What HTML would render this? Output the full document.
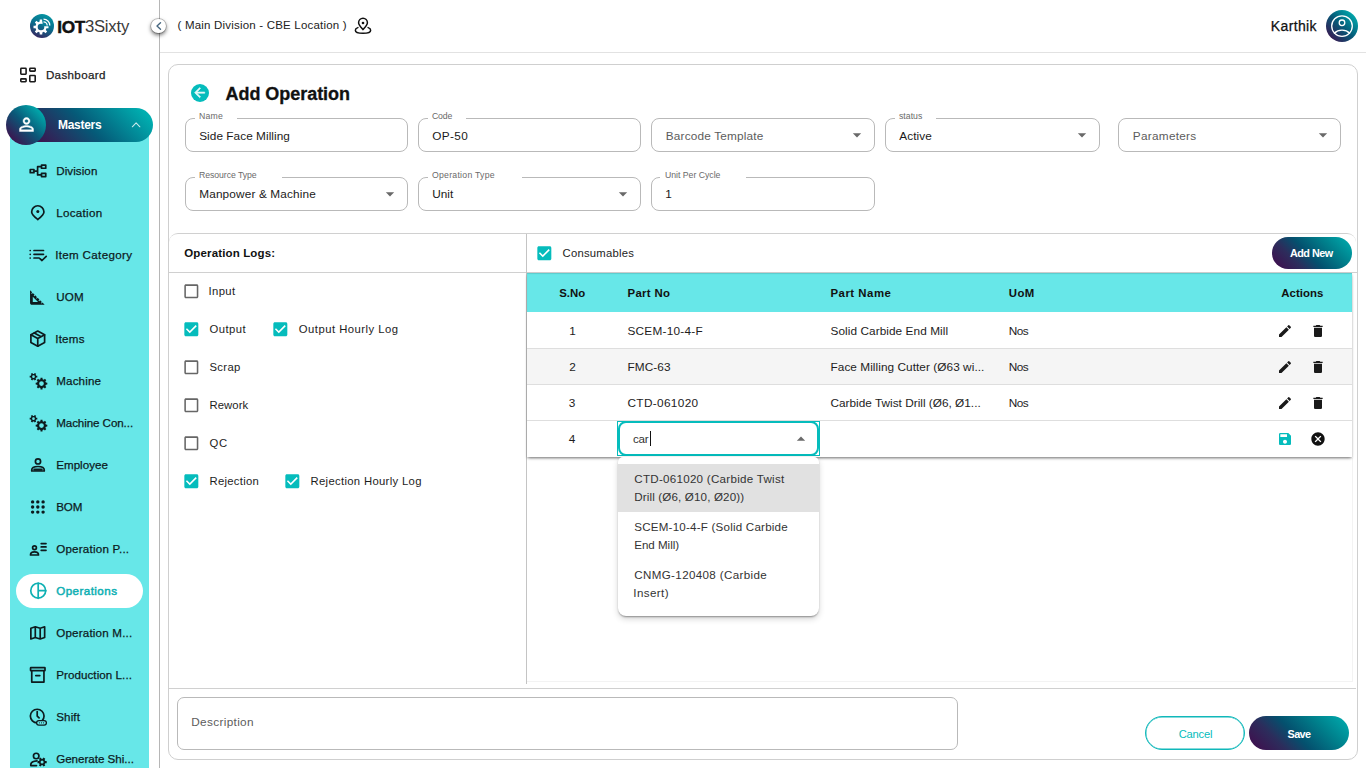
<!DOCTYPE html>
<html lang="en"><head><meta charset="utf-8"><title>Add Operation - IOT3Sixty</title>
<style>
html,body{margin:0;padding:0}
body{width:1366px;height:768px;overflow:hidden;position:relative;background:#fff;font-family:"Liberation Sans",sans-serif;color:#1d1d1d}
.t{position:absolute;white-space:nowrap;font-weight:400}
svg{display:block}
</style></head><body>
<aside style="position:absolute;left:0;top:0;width:159px;height:768px;border-right:1px solid #b6b6b6;background:#fff">
<svg style="position:absolute;left:30px;top:14px" width="24" height="24" viewBox="0 0 24 24"><defs><linearGradient id="lg" x1="0.7" y1="0" x2="0.3" y2="1"><stop offset="0" stop-color="#0597a3"/><stop offset=".5" stop-color="#0a6d8c"/><stop offset="1" stop-color="#3a2560"/></linearGradient></defs><circle cx="12" cy="12" r="12" fill="url(#lg)"/><path fill="#fff" fill-rule="evenodd" d="M16.43 11.65 L18.50 11.75 L18.50 14.25 L16.43 14.35 L15.80 15.89 L17.18 17.42 L15.42 19.18 L13.89 17.80 L12.35 18.43 L12.25 20.50 L9.75 20.50 L9.65 18.43 L8.11 17.80 L6.58 19.18 L4.82 17.42 L6.20 15.89 L5.57 14.35 L3.50 14.25 L3.50 11.75 L5.57 11.65 L6.20 10.11 L4.82 8.58 L6.58 6.82 L8.11 8.20 L9.65 7.57 L9.75 5.50 L12.25 5.50 L12.35 7.57 L13.89 8.20 L15.42 6.82 L17.18 8.58 L15.80 10.11Z M14.30 13.00 a3.3 3.3 0 1 0 -6.60 0 a3.3 3.3 0 1 0 6.60 0Z"/><path d="M12.5 3.5v8.800h8.800A8.800 8.800 0 0 0 12.500 3.500z" fill="#0a7f98"/><g fill="none" stroke="#fff" stroke-width="1.300"><path d="M13.500 5.200a6.300 6.300 0 0 1 6.300 6.300M13.500 7.800a3.700 3.700 0 0 1 3.700 3.700"/></g></svg>
<span class="t" style="left:57.20px;top:16.50px;font-size:17.2px;line-height:20px;color:#111;font-weight:700;-webkit-text-stroke:.5px currentColor;letter-spacing:-0.27px">IOT</span>
<span class="t" style="left:84.90px;top:16.50px;font-size:16.7px;line-height:20px;color:#3a3a3a;letter-spacing:-0.22px">3Sixty</span>
<svg style="position:absolute;left:18px;top:65px;color:#1a1a1a" width="20" height="20" viewBox="18 65 20 20" fill="none" stroke="currentColor" stroke-width="1.6" stroke-linecap="round" stroke-linejoin="round"><rect x="20.8" y="68.3" width="5.3" height="5.9" rx=".6"/><rect x="20.8" y="78.9" width="5.3" height="2.8" rx=".6"/><rect x="29.8" y="68.3" width="5.4" height="2.8" rx=".6"/><rect x="29.8" y="75.55" width="5.4" height="6.15" rx=".6"/></svg>
<span class="t" style="left:45.90px;top:66.70px;font-size:11.6px;line-height:16px;color:#1d1d1d;-webkit-text-stroke:.25px currentColor;letter-spacing:0.35px">Dashboard</span>
<div style="position:absolute;left:10px;top:125px;width:139px;height:643px;background:#67e7e8"></div>
<div style="position:absolute;left:20px;top:108px;width:133px;height:34px;border-radius:17px;background:linear-gradient(45deg,#3b1650 12%,#055a78 50%,#00aeb0 92%)"></div>
<div style="position:absolute;left:6px;top:105px;width:40px;height:40px;border-radius:50%;background:linear-gradient(45deg,#3b1650 14%,#0a5878 50%,#00a9ac 86%)"></div>
<svg style="position:absolute;left:15.5px;top:114.1px;color:#fff;" width="21" height="21" viewBox="0 0 24 24" fill="currentColor"><path stroke="currentColor" stroke-width=".5" d="M12 5.9c1.16 0 2.1.94 2.1 2.1s-.94 2.1-2.1 2.1S9.9 9.16 9.9 8s.94-2.1 2.1-2.1m0 9c2.97 0 6.1 1.46 6.1 2.1v1.1H5.9V17c0-.64 3.13-2.1 6.1-2.1M12 4C9.79 4 8 5.79 8 8s1.79 4 4 4 4-1.79 4-4-1.79-4-4-4zm0 9c-2.67 0-8 1.34-8 4v3h16v-3c0-2.66-5.33-4-8-4z"/></svg>
<span class="t" style="left:58.00px;top:116.80px;font-size:12px;line-height:16px;color:#fff;font-weight:700;letter-spacing:-0.28px">Masters</span>
<svg style="position:absolute;left:128px;top:118px;color:rgba(255,255,255,.8)" width="16" height="14" viewBox="128 118 16 14" fill="none" stroke="currentColor" stroke-width="1.05" stroke-linecap="round" stroke-linejoin="round"><path d="M132.300 126.800L136.100 122.800L139.900 126.800"/></svg>
<div style="position:absolute;left:16px;top:574px;width:127px;height:34px;border-radius:17px;background:#fff"></div>
<svg style="position:absolute;left:26px;top:159px;color:#0d1b1e" width="24" height="24" viewBox="26 159 24 24" fill="none" stroke="currentColor" stroke-width="1.7" stroke-linecap="round" stroke-linejoin="round"><g transform="translate(0 0)"><rect x="30.25" y="169.5" width="3.7" height="3.2"/><rect x="41.5" y="165.15" width="4.25" height="3.1"/><rect x="41.5" y="173.35" width="4.25" height="3.2"/><path d="M34.7 171.1H37.6M37.6 166.7V174.95M37.6 166.7H40.75M37.6 174.95H40.75"/></g></svg>
<span class="t" style="left:56.20px;top:162.70px;font-size:11.6px;line-height:16px;color:#0d1b1e;-webkit-text-stroke:.25px currentColor;letter-spacing:0.08px">Division</span>
<svg style="position:absolute;left:26px;top:201px;color:#0d1b1e" width="24" height="24" viewBox="26 201 24 24" fill="none" stroke="currentColor" stroke-width="1.7" stroke-linecap="round" stroke-linejoin="round"><g transform="translate(0 0)"><path d="M37.8 219.5C36 218 31.65 214.6 31.65 211.9A6.15 6.15 0 0 1 43.95 211.9C43.95 214.6 39.6 218 37.8 219.5Z"/><circle cx="37.8" cy="211.6" r="1.5" fill="currentColor" stroke="none"/></g></svg>
<span class="t" style="left:56.20px;top:204.70px;font-size:11.6px;line-height:16px;color:#0d1b1e;-webkit-text-stroke:.25px currentColor;letter-spacing:0.30px">Location</span>
<svg style="position:absolute;left:26px;top:243px;color:#0d1b1e" width="24" height="24" viewBox="26 243 24 24" fill="none" stroke="currentColor" stroke-width="1.7" stroke-linecap="round" stroke-linejoin="round"><g transform="translate(0 0)"><path d="M34 250.5H43.5M34 254.3H43.5M34 258H39M30.2 250.5h.01M30.2 254.3h.01M30.2 258h.01M39.9 258.6L42 260.5L46.2 256.3"/></g></svg>
<span class="t" style="left:55.20px;top:246.70px;font-size:11.6px;line-height:16px;color:#0d1b1e;-webkit-text-stroke:.25px currentColor;letter-spacing:0.33px">Item Category</span>
<svg style="position:absolute;left:26px;top:285px;color:#0d1b1e" width="24" height="24" viewBox="26 285 24 24" fill="none" stroke="currentColor" stroke-width="1.7" stroke-linecap="round" stroke-linejoin="round"><g transform="translate(26.4 286.5) scale(0.9125)" fill="currentColor" stroke="none"><path d="M17.66 17.66l-1.06 1.06-.71-.71 1.06-1.06-1.94-1.94-1.06 1.06-.71-.71 1.06-1.06-1.94-1.94-1.06 1.06-.71-.71 1.06-1.06L9.7 9.7l-1.06 1.06-.71-.71 1.06-1.06-1.94-1.94-1.06 1.06-.71-.71 1.06-1.06L4 4v14c0 1.1.9 2 2 2h14l-2.34-2.34zM7 17v-5.76L12.76 17H7z"/></g></svg>
<span class="t" style="left:56.20px;top:288.70px;font-size:11.6px;line-height:16px;color:#0d1b1e;-webkit-text-stroke:.25px currentColor;letter-spacing:0.15px">UOM</span>
<svg style="position:absolute;left:26px;top:327px;color:#0d1b1e" width="24" height="24" viewBox="26 327 24 24" fill="none" stroke="currentColor" stroke-width="1.7" stroke-linecap="round" stroke-linejoin="round"><g transform="translate(0 0)"><path d="M37.75 331L44.6 334.8V342.5L37.75 346.2L30.9 342.5V334.8Z"/><path d="M30.9 334.8L37.75 338.6L44.6 334.8M37.75 338.6V346.2M34.3 332.9L41.2 336.7"/></g></svg>
<span class="t" style="left:55.20px;top:330.70px;font-size:11.6px;line-height:16px;color:#0d1b1e;-webkit-text-stroke:.25px currentColor;letter-spacing:0.24px">Items</span>
<svg style="position:absolute;left:26px;top:369px;color:#0d1b1e" width="24" height="24" viewBox="26 369 24 24" fill="none" stroke="currentColor" stroke-width="1.7" stroke-linecap="round" stroke-linejoin="round"><g transform="translate(0 0)"><path fill="currentColor" stroke="none" fill-rule="evenodd" d="M36.20 375.79 L37.31 375.85 L37.31 377.55 L36.20 377.61 L35.64 378.58 L36.14 379.57 L34.67 380.42 L34.06 379.49 L32.94 379.49 L32.33 380.42 L30.86 379.57 L31.36 378.58 L30.80 377.61 L29.69 377.55 L29.69 375.85 L30.80 375.79 L31.36 374.82 L30.86 373.83 L32.33 372.98 L32.94 373.91 L34.06 373.91 L34.67 372.98 L36.14 373.83 L35.64 374.82Z M34.85 376.70 a1.35 1.35 0 1 0 -2.70 0 a1.35 1.35 0 1 0 2.70 0Z"/><path fill="currentColor" stroke="none" fill-rule="evenodd" d="M45.87 382.52 L47.32 382.63 L47.32 384.57 L45.87 384.68 L45.36 385.92 L46.30 387.03 L44.93 388.40 L43.82 387.46 L42.58 387.97 L42.47 389.42 L40.53 389.42 L40.42 387.97 L39.18 387.46 L38.07 388.40 L36.70 387.03 L37.64 385.92 L37.13 384.68 L35.68 384.57 L35.68 382.63 L37.13 382.52 L37.64 381.28 L36.70 380.17 L38.07 378.80 L39.18 379.74 L40.42 379.23 L40.53 377.78 L42.47 377.78 L42.58 379.23 L43.82 379.74 L44.93 378.80 L46.30 380.17 L45.36 381.28Z M43.85 383.60 a2.35 2.35 0 1 0 -4.70 0 a2.35 2.35 0 1 0 4.70 0Z"/></g></svg>
<span class="t" style="left:56.20px;top:372.70px;font-size:11.6px;line-height:16px;color:#0d1b1e;-webkit-text-stroke:.25px currentColor;letter-spacing:0.17px">Machine</span>
<svg style="position:absolute;left:26px;top:411px;color:#0d1b1e" width="24" height="24" viewBox="26 411 24 24" fill="none" stroke="currentColor" stroke-width="1.7" stroke-linecap="round" stroke-linejoin="round"><g transform="translate(0 42)"><path fill="currentColor" stroke="none" fill-rule="evenodd" d="M36.20 375.79 L37.31 375.85 L37.31 377.55 L36.20 377.61 L35.64 378.58 L36.14 379.57 L34.67 380.42 L34.06 379.49 L32.94 379.49 L32.33 380.42 L30.86 379.57 L31.36 378.58 L30.80 377.61 L29.69 377.55 L29.69 375.85 L30.80 375.79 L31.36 374.82 L30.86 373.83 L32.33 372.98 L32.94 373.91 L34.06 373.91 L34.67 372.98 L36.14 373.83 L35.64 374.82Z M34.85 376.70 a1.35 1.35 0 1 0 -2.70 0 a1.35 1.35 0 1 0 2.70 0Z"/><path fill="currentColor" stroke="none" fill-rule="evenodd" d="M45.87 382.52 L47.32 382.63 L47.32 384.57 L45.87 384.68 L45.36 385.92 L46.30 387.03 L44.93 388.40 L43.82 387.46 L42.58 387.97 L42.47 389.42 L40.53 389.42 L40.42 387.97 L39.18 387.46 L38.07 388.40 L36.70 387.03 L37.64 385.92 L37.13 384.68 L35.68 384.57 L35.68 382.63 L37.13 382.52 L37.64 381.28 L36.70 380.17 L38.07 378.80 L39.18 379.74 L40.42 379.23 L40.53 377.78 L42.47 377.78 L42.58 379.23 L43.82 379.74 L44.93 378.80 L46.30 380.17 L45.36 381.28Z M43.85 383.60 a2.35 2.35 0 1 0 -4.70 0 a2.35 2.35 0 1 0 4.70 0Z"/></g></svg>
<span class="t" style="left:56.20px;top:414.70px;font-size:11.6px;line-height:16px;color:#0d1b1e;-webkit-text-stroke:.25px currentColor;letter-spacing:-0.08px">Machine Con...</span>
<svg style="position:absolute;left:26px;top:453px;color:#0d1b1e" width="24" height="24" viewBox="26 453 24 24" fill="none" stroke="currentColor" stroke-width="1.7" stroke-linecap="round" stroke-linejoin="round"><g transform="translate(0 0)"><circle cx="38" cy="461.4" r="2.6"/><path d="M31.75 471v-1c0-2.500 2.800-3.500 6.250-3.500s6.250 1 6.250 3.500v1z"/><path d="M34.300 469.600H41.700" stroke-width="2.100"/></g></svg>
<span class="t" style="left:56.20px;top:456.70px;font-size:11.6px;line-height:16px;color:#0d1b1e;-webkit-text-stroke:.25px currentColor;letter-spacing:0.03px">Employee</span>
<svg style="position:absolute;left:26px;top:495px;color:#0d1b1e" width="24" height="24" viewBox="26 495 24 24" fill="none" stroke="currentColor" stroke-width="1.7" stroke-linecap="round" stroke-linejoin="round"><g transform="translate(0 0)" fill="currentColor" stroke="none"><circle cx="32.6" cy="501.9" r="1.7"/><circle cx="32.6" cy="507" r="1.7"/><circle cx="32.6" cy="512.1" r="1.7"/><circle cx="37.8" cy="501.9" r="1.7"/><circle cx="37.8" cy="507" r="1.7"/><circle cx="37.8" cy="512.1" r="1.7"/><circle cx="43.1" cy="501.9" r="1.7"/><circle cx="43.1" cy="507" r="1.7"/><circle cx="43.1" cy="512.1" r="1.7"/></g></svg>
<span class="t" style="left:56.20px;top:498.70px;font-size:11.6px;line-height:16px;color:#0d1b1e;-webkit-text-stroke:.25px currentColor;letter-spacing:-0.08px">BOM</span>
<svg style="position:absolute;left:26px;top:537px;color:#0d1b1e" width="24" height="24" viewBox="26 537 24 24" fill="none" stroke="currentColor" stroke-width="1.7" stroke-linecap="round" stroke-linejoin="round"><g transform="translate(0 0)"><circle cx="34.5" cy="547.7" r="1.9"/><path d="M30.5 555c0-2 1.800-3.200 4-3.200s4 1.200 4 3.200z"/><path d="M41.200 543.600H46M41.200 546.900H46M41.200 550.300H46"/></g></svg>
<span class="t" style="left:56.20px;top:540.70px;font-size:11.6px;line-height:16px;color:#0d1b1e;-webkit-text-stroke:.25px currentColor;letter-spacing:0.22px">Operation P...</span>
<svg style="position:absolute;left:26px;top:579px;color:#0fb0b3" width="24" height="24" viewBox="26 579 24 24" fill="none" stroke="currentColor" stroke-width="1.7" stroke-linecap="round" stroke-linejoin="round"><g transform="translate(0 0)" stroke-width="1.700"><circle cx="38.2" cy="590.7" r="7.45"/><path d="M38.2 583.1V598.3M38.2 590.7H45.8"/></g></svg>
<span class="t" style="left:56.20px;top:582.70px;font-size:11.6px;line-height:16px;color:#0fb0b3;-webkit-text-stroke:.5px currentColor;letter-spacing:0.45px">Operations</span>
<svg style="position:absolute;left:26px;top:621px;color:#0d1b1e" width="24" height="24" viewBox="26 621 24 24" fill="none" stroke="currentColor" stroke-width="1.7" stroke-linecap="round" stroke-linejoin="round"><g transform="translate(0 0)"><path d="M30.85 628.3L35.3 626.8L40.2 628.3L44.65 626.8V637.5L40.2 639L35.3 637.5L30.85 639ZM35.3 626.8V637.5M40.2 628.3V639"/></g></svg>
<span class="t" style="left:56.20px;top:624.70px;font-size:11.6px;line-height:16px;color:#0d1b1e;-webkit-text-stroke:.25px currentColor;letter-spacing:0.20px">Operation M...</span>
<svg style="position:absolute;left:26px;top:663px;color:#0d1b1e" width="24" height="24" viewBox="26 663 24 24" fill="none" stroke="currentColor" stroke-width="1.7" stroke-linecap="round" stroke-linejoin="round"><g transform="translate(0 0)"><rect x="30.55" y="667.65" width="14.45" height="2.9" rx=".4"/><path d="M31.75 671V682.05H43.95V671M35.8 675.600H39.800"/></g></svg>
<span class="t" style="left:56.20px;top:666.70px;font-size:11.6px;line-height:16px;color:#0d1b1e;-webkit-text-stroke:.25px currentColor;letter-spacing:0.07px">Production L...</span>
<svg style="position:absolute;left:26px;top:705px;color:#0d1b1e" width="24" height="24" viewBox="26 705 24 24" fill="none" stroke="currentColor" stroke-width="1.7" stroke-linecap="round" stroke-linejoin="round"><g transform="translate(0 0)"><circle cx="37.2" cy="716.1" r="6.85"/><path d="M37.2 711.500V716.100L39.100 717.900"/><rect x="36.600" y="720.600" width="9.800" height="4.500" rx="2.250" fill="#67e7e8" stroke-width="1.300"/><g fill="currentColor" stroke="none"><circle cx="39.400" cy="722.850" r=".55"/><circle cx="41.500" cy="722.850" r=".55"/><circle cx="43.600" cy="722.850" r=".55"/></g></g></svg>
<span class="t" style="left:56.20px;top:708.70px;font-size:11.6px;line-height:16px;color:#0d1b1e;-webkit-text-stroke:.25px currentColor;letter-spacing:0.13px">Shift</span>
<svg style="position:absolute;left:26px;top:747px;color:#0d1b1e" width="24" height="24" viewBox="26 747 24 24" fill="none" stroke="currentColor" stroke-width="1.7" stroke-linecap="round" stroke-linejoin="round"><g transform="translate(0 0)"><circle cx="36.2" cy="756" r="2.750"/><path d="M37 760.800C33.500 761 30.800 762.300 30.800 764.600V765.600H36.500"/><path fill="currentColor" stroke="none" fill-rule="evenodd" d="M45.23 761.05 L46.69 761.07 L46.69 763.13 L45.23 763.15 L44.58 764.28 L45.28 765.56 L43.51 766.58 L42.75 765.33 L41.45 765.33 L40.69 766.58 L38.92 765.56 L39.62 764.28 L38.97 763.15 L37.51 763.13 L37.51 761.07 L38.97 761.05 L39.62 759.92 L38.92 758.64 L40.69 757.62 L41.45 758.87 L42.75 758.87 L43.51 757.62 L45.28 758.64 L44.58 759.92Z M43.60 762.10 a1.5 1.5 0 1 0 -3.00 0 a1.5 1.5 0 1 0 3.00 0Z"/></g></svg>
<span class="t" style="left:56.20px;top:750.70px;font-size:11.6px;line-height:16px;color:#0d1b1e;-webkit-text-stroke:.25px currentColor;letter-spacing:-0.02px">Generate Shi...</span>
</aside>
<header style="position:absolute;left:160px;top:0;width:1206px;height:52px;border-bottom:1px solid #e2e2e2;background:#fff">
</header>
<div style="position:absolute;left:151.300px;top:18.500px;width:14.800px;height:14.800px;border-radius:50%;background:#fff;box-shadow:0 0 0 .7px rgba(0,0,0,.25),0 2px 4px rgba(0,0,0,.6)"></div>
<svg style="position:absolute;left:151px;top:18px;color:#45657e" width="15" height="16" viewBox="151 18 15 16" fill="none" stroke="currentColor" stroke-width="1.4" stroke-linecap="round" stroke-linejoin="round"><path d="M160.500 22.800L157 26L160.500 29.200"/></svg>
<span class="t" style="left:177.50px;top:16.90px;font-size:11.5px;line-height:16px;color:#222;letter-spacing:0.20px">( Main Division - CBE Location )</span>
<svg style="position:absolute;left:352px;top:14px;color:#111" width="22" height="22" viewBox="352 14 22 22" fill="none" stroke="currentColor" stroke-width="1.5" stroke-linecap="round" stroke-linejoin="round"><path d="M363 29.600C361 27.200 358.600 25 358.600 22.700A4.400 4.400 0 0 1 367.400 22.700C367.400 25 365 27.200 363 29.600Z"/><circle cx="363" cy="23" r="1.300" fill="currentColor" stroke="none"/><path d="M357.900 27.600C356.200 28.200 355.350 29.200 355.350 30.200C355.350 32 358.800 33.300 363 33.300S370.650 32 370.650 30.200C370.650 29.200 369.800 28.200 368.100 27.600"/></svg>
<span class="t" style="left:1270.80px;top:17.00px;font-size:14px;line-height:18px;color:#111;-webkit-text-stroke:.25px currentColor;letter-spacing:0.37px">Karthik</span>
<div style="position:absolute;left:1326px;top:10px;width:32px;height:32px;border-radius:50%;background:linear-gradient(45deg,#3b1650 10%,#055a78 50%,#00aeb0 90%)"></div>
<svg style="position:absolute;left:1329px;top:13px;color:#fff" width="26" height="26" viewBox="1329 13 26 26" fill="none" stroke="currentColor" stroke-width="1.3" stroke-linecap="round" stroke-linejoin="round"><circle cx="1342" cy="26.1" r="10.300"/><circle cx="1342" cy="22.800" r="2.800"/><path d="M1334.400 33.200C1336.200 31.300 1338.900 30.200 1342 30.200S1347.800 31.300 1349.600 33.200"/></svg>
<main style="position:absolute;left:168px;top:64px;width:1188px;height:694px;border:1px solid #cfcfcf;border-radius:10px;background:#fff"></main>
<div style="position:absolute;left:191px;top:84px;width:18px;height:18px;border-radius:50%;background:#05bcbc"></div>
<svg style="position:absolute;left:192.35px;top:85.3px;color:#e4f8f8;" width="15.3" height="15.3" viewBox="0 0 24 24" fill="currentColor"><path stroke="currentColor" stroke-width=".9" stroke-linejoin="round" d="M20 11H7.83l5.59-5.59L12 4l-8 8 8 8 1.41-1.41L7.83 13H20v-2z"/></svg>
<span class="t" style="left:225.50px;top:81.90px;font-size:18px;line-height:24px;color:#111;font-weight:700;-webkit-text-stroke:.3px currentColor;letter-spacing:-0.04px">Add Operation</span>
<div style="position:absolute;left:185px;top:118px;width:221px;height:32px;border:1px solid #b9b9b9;border-radius:8px"></div>
<div style="position:absolute;left:195px;top:118px;width:42px;height:1px;background:#fff"></div>
<span class="t" style="left:199.00px;top:109.90px;font-size:8.7px;line-height:12px;color:#6a6a6a;letter-spacing:0.22px">Name</span>
<span class="t" style="left:199.20px;top:128.00px;font-size:11.8px;line-height:16px;color:#1a1a1a;letter-spacing:0.05px">Side Face Milling</span>
<div style="position:absolute;left:418px;top:118px;width:221px;height:32px;border:1px solid #b9b9b9;border-radius:8px"></div>
<div style="position:absolute;left:428px;top:118px;width:38px;height:1px;background:#fff"></div>
<span class="t" style="left:432.00px;top:109.90px;font-size:8.7px;line-height:12px;color:#6a6a6a;letter-spacing:-0.15px">Code</span>
<span class="t" style="left:432.20px;top:128.00px;font-size:11.8px;line-height:16px;color:#1a1a1a;letter-spacing:0.37px">OP-50</span>
<div style="position:absolute;left:651px;top:118px;width:222px;height:32px;border:1px solid #b9b9b9;border-radius:8px"></div>
<span class="t" style="left:665.80px;top:128.00px;font-size:11.8px;line-height:16px;color:#5c5c5c;letter-spacing:0.17px">Barcode Template</span>
<svg style="position:absolute;left:846.9px;top:124.85px;color:#696969;" width="20" height="20" viewBox="0 0 24 24" fill="currentColor"><path d="M7 10l5 5 5-5z"/></svg>
<div style="position:absolute;left:885px;top:118px;width:213px;height:32px;border:1px solid #b9b9b9;border-radius:8px"></div>
<div style="position:absolute;left:895px;top:118px;width:41px;height:1px;background:#fff"></div>
<span class="t" style="left:899.00px;top:109.90px;font-size:8.7px;line-height:12px;color:#6a6a6a;letter-spacing:0.03px">status</span>
<span class="t" style="left:899.20px;top:128.00px;font-size:11.8px;line-height:16px;color:#1a1a1a;letter-spacing:0.09px">Active</span>
<svg style="position:absolute;left:1071.9px;top:124.85px;color:#696969;" width="20" height="20" viewBox="0 0 24 24" fill="currentColor"><path d="M7 10l5 5 5-5z"/></svg>
<div style="position:absolute;left:1118px;top:118px;width:221px;height:32px;border:1px solid #b9b9b9;border-radius:8px"></div>
<span class="t" style="left:1132.80px;top:128.00px;font-size:11.8px;line-height:16px;color:#5c5c5c;letter-spacing:0.27px">Parameters</span>
<svg style="position:absolute;left:1312.9px;top:124.85px;color:#696969;" width="20" height="20" viewBox="0 0 24 24" fill="currentColor"><path d="M7 10l5 5 5-5z"/></svg>
<div style="position:absolute;left:185px;top:177px;width:221px;height:32px;border:1px solid #b9b9b9;border-radius:8px"></div>
<div style="position:absolute;left:195px;top:177px;width:87px;height:1px;background:#fff"></div>
<span class="t" style="left:199.00px;top:168.90px;font-size:8.7px;line-height:12px;color:#6a6a6a;letter-spacing:-0.05px">Resource Type</span>
<span class="t" style="left:199.20px;top:185.90px;font-size:11.8px;line-height:16px;color:#1a1a1a;letter-spacing:0.15px">Manpower &amp; Machine</span>
<svg style="position:absolute;left:379.9px;top:183.85px;color:#696969;" width="20" height="20" viewBox="0 0 24 24" fill="currentColor"><path d="M7 10l5 5 5-5z"/></svg>
<div style="position:absolute;left:418px;top:177px;width:221px;height:32px;border:1px solid #b9b9b9;border-radius:8px"></div>
<div style="position:absolute;left:428px;top:177px;width:94px;height:1px;background:#fff"></div>
<span class="t" style="left:432.00px;top:168.90px;font-size:8.7px;line-height:12px;color:#6a6a6a;letter-spacing:0.26px">Operation Type</span>
<span class="t" style="left:432.20px;top:185.90px;font-size:11.8px;line-height:16px;color:#1a1a1a;letter-spacing:0.02px">Unit</span>
<svg style="position:absolute;left:612.9px;top:183.85px;color:#696969;" width="20" height="20" viewBox="0 0 24 24" fill="currentColor"><path d="M7 10l5 5 5-5z"/></svg>
<div style="position:absolute;left:651px;top:177px;width:222px;height:32px;border:1px solid #b9b9b9;border-radius:8px"></div>
<div style="position:absolute;left:660px;top:177px;width:86px;height:1px;background:#fff"></div>
<span class="t" style="left:665.00px;top:168.90px;font-size:8.7px;line-height:12px;color:#6a6a6a;letter-spacing:-0.01px">Unit Per Cycle</span>
<span class="t" style="left:665.20px;top:185.90px;font-size:11.8px;line-height:16px;color:#1a1a1a">1</span>
<section style="position:absolute;left:169px;top:233px;width:1187px;height:456px;border-top:1px solid #d0d0d0;border-bottom:1px solid #d0d0d0;border-radius:9px 9px 0 0;box-sizing:border-box"></section>
<div style="position:absolute;left:169px;top:272px;width:1188px;height:1px;background:#d0d0d0"></div>
<div style="position:absolute;left:526px;top:234px;width:1px;height:450px;background:#c4c4c4"></div>
<div style="position:absolute;left:527px;top:681px;width:826px;height:1px;background:#f3f3f3"></div>
<div style="position:absolute;left:1352px;top:458px;width:1px;height:224px;background:#f3f3f3"></div>
<span class="t" style="left:184.25px;top:245.20px;font-size:11.5px;line-height:16px;color:#111;font-weight:700;letter-spacing:0.14px">Operation Logs:</span>
<svg style="position:absolute;left:181.665px;top:281.665px;color:#666;" width="18.67" height="18.67" viewBox="0 0 24 24" fill="currentColor"><path d="M19 5v14H5V5h14m0-2H5c-1.1 0-2 .9-2 2v14c0 1.1.9 2 2 2h14c1.1 0 2-.9 2-2V5c0-1.1-.9-2-2-2z"/></svg>
<span class="t" style="left:208.50px;top:283.30px;font-size:11.3px;line-height:16px;color:#1d1d1d;letter-spacing:0.38px">Input</span>
<svg style="position:absolute;left:181.665px;top:319.665px;color:#05bcbc;" width="18.67" height="18.67" viewBox="0 0 24 24" fill="currentColor"><path d="M19 3H5c-1.11 0-2 .9-2 2v14c0 1.1.89 2 2 2h14c1.11 0 2-.9 2-2V5c0-1.1-.89-2-2-2zm-9 14l-5-5 1.41-1.41L10 14.17l7.59-7.59L19 8l-9 9z"/></svg>
<span class="t" style="left:209.50px;top:321.30px;font-size:11.3px;line-height:16px;color:#1d1d1d;letter-spacing:0.45px">Output</span>
<svg style="position:absolute;left:270.665px;top:319.665px;color:#05bcbc;" width="18.67" height="18.67" viewBox="0 0 24 24" fill="currentColor"><path d="M19 3H5c-1.11 0-2 .9-2 2v14c0 1.1.89 2 2 2h14c1.11 0 2-.9 2-2V5c0-1.1-.89-2-2-2zm-9 14l-5-5 1.41-1.41L10 14.17l7.59-7.59L19 8l-9 9z"/></svg>
<span class="t" style="left:298.75px;top:321.30px;font-size:11.3px;line-height:16px;color:#1d1d1d;letter-spacing:0.48px">Output Hourly Log</span>
<svg style="position:absolute;left:181.665px;top:357.665px;color:#666;" width="18.67" height="18.67" viewBox="0 0 24 24" fill="currentColor"><path d="M19 5v14H5V5h14m0-2H5c-1.1 0-2 .9-2 2v14c0 1.1.9 2 2 2h14c1.1 0 2-.9 2-2V5c0-1.1-.9-2-2-2z"/></svg>
<span class="t" style="left:209.50px;top:359.30px;font-size:11.3px;line-height:16px;color:#1d1d1d;letter-spacing:0.32px">Scrap</span>
<svg style="position:absolute;left:181.665px;top:395.665px;color:#666;" width="18.67" height="18.67" viewBox="0 0 24 24" fill="currentColor"><path d="M19 5v14H5V5h14m0-2H5c-1.1 0-2 .9-2 2v14c0 1.1.9 2 2 2h14c1.1 0 2-.9 2-2V5c0-1.1-.9-2-2-2z"/></svg>
<span class="t" style="left:209.50px;top:397.30px;font-size:11.3px;line-height:16px;color:#1d1d1d;letter-spacing:0.07px">Rework</span>
<svg style="position:absolute;left:181.665px;top:433.665px;color:#666;" width="18.67" height="18.67" viewBox="0 0 24 24" fill="currentColor"><path d="M19 5v14H5V5h14m0-2H5c-1.1 0-2 .9-2 2v14c0 1.1.9 2 2 2h14c1.1 0 2-.9 2-2V5c0-1.1-.9-2-2-2z"/></svg>
<span class="t" style="left:209.50px;top:435.30px;font-size:11.3px;line-height:16px;color:#1d1d1d;letter-spacing:0.71px">QC</span>
<svg style="position:absolute;left:181.665px;top:471.665px;color:#05bcbc;" width="18.67" height="18.67" viewBox="0 0 24 24" fill="currentColor"><path d="M19 3H5c-1.11 0-2 .9-2 2v14c0 1.1.89 2 2 2h14c1.11 0 2-.9 2-2V5c0-1.1-.89-2-2-2zm-9 14l-5-5 1.41-1.41L10 14.17l7.59-7.59L19 8l-9 9z"/></svg>
<span class="t" style="left:209.50px;top:473.30px;font-size:11.3px;line-height:16px;color:#1d1d1d;letter-spacing:0.27px">Rejection</span>
<svg style="position:absolute;left:282.665px;top:471.665px;color:#05bcbc;" width="18.67" height="18.67" viewBox="0 0 24 24" fill="currentColor"><path d="M19 3H5c-1.11 0-2 .9-2 2v14c0 1.1.89 2 2 2h14c1.11 0 2-.9 2-2V5c0-1.1-.89-2-2-2zm-9 14l-5-5 1.41-1.41L10 14.17l7.59-7.59L19 8l-9 9z"/></svg>
<span class="t" style="left:310.50px;top:473.30px;font-size:11.3px;line-height:16px;color:#1d1d1d;letter-spacing:0.32px">Rejection Hourly Log</span>
<svg style="position:absolute;left:534.665px;top:243.665px;color:#05bcbc;" width="18.67" height="18.67" viewBox="0 0 24 24" fill="currentColor"><path d="M19 3H5c-1.11 0-2 .9-2 2v14c0 1.1.89 2 2 2h14c1.11 0 2-.9 2-2V5c0-1.1-.89-2-2-2zm-9 14l-5-5 1.41-1.41L10 14.17l7.59-7.59L19 8l-9 9z"/></svg>
<span class="t" style="left:562.50px;top:245.20px;font-size:11.3px;line-height:16px;color:#1d1d1d;letter-spacing:0.23px">Consumables</span>
<div style="position:absolute;left:1272px;top:237px;width:80px;height:32px;border-radius:16px;background:linear-gradient(45deg,#3d1350 8%,#2c2d5c 28%,#04506e 46%,#00808c 72%,#00a9ac 96%)"></div>
<span class="t" style="left:1290.00px;top:245.40px;font-size:10.8px;line-height:16px;color:#fff;font-weight:700;letter-spacing:-0.51px">Add New</span>
<div style="position:absolute;left:527px;top:273px;width:825px;height:184px;background:#fff;box-shadow:0 2px 3px -1px rgba(0,0,0,.45),0 1px 2px rgba(0,0,0,.18)"></div>
<div style="position:absolute;left:527px;top:273px;width:825px;height:39px;background:#67e7e8;box-shadow:inset 0 1px 1px rgba(0,0,0,.12)"></div>
<span class="t" style="left:559.25px;top:284.90px;font-size:11.4px;line-height:16px;color:#111;font-weight:700">S.No</span>
<span class="t" style="left:627.50px;top:284.90px;font-size:11.4px;line-height:16px;color:#111;font-weight:700;letter-spacing:0.33px">Part No</span>
<span class="t" style="left:830.50px;top:284.90px;font-size:11.4px;line-height:16px;color:#111;font-weight:700;letter-spacing:0.50px">Part Name</span>
<span class="t" style="left:1008.75px;top:284.90px;font-size:11.4px;line-height:16px;color:#111;font-weight:700;letter-spacing:0.41px">UoM</span>
<span class="t" style="left:1281.25px;top:284.90px;font-size:11.4px;line-height:16px;color:#111;font-weight:700;letter-spacing:0.05px">Actions</span>
<div style="position:absolute;left:527px;top:313px;width:825px;height:36px;background:#fff;border-bottom:1px solid #dedede;box-sizing:border-box"></div>
<span class="t" style="left:569.30px;top:322.60px;font-size:11.8px;line-height:16px;color:#1d1d1d">1</span>
<span class="t" style="left:627.50px;top:322.60px;font-size:11.8px;line-height:16px;color:#1d1d1d;letter-spacing:0.24px">SCEM-10-4-F</span>
<span class="t" style="left:830.50px;top:322.60px;font-size:11.8px;line-height:16px;color:#1d1d1d;letter-spacing:0.07px">Solid Carbide End Mill</span>
<span class="t" style="left:1008.75px;top:322.60px;font-size:11.8px;line-height:16px;color:#1d1d1d;letter-spacing:-0.54px">Nos</span>
<svg style="position:absolute;left:1277.4px;top:322.90000000000003px;color:#1a1a1a;" width="16" height="16" viewBox="0 0 24 24" fill="currentColor"><path d="M3 17.25V21h3.75L17.81 9.94l-3.75-3.75L3 17.25zM20.71 7.04c.39-.39.39-1.02 0-1.41l-2.34-2.34a.996.996 0 0 0-1.41 0l-1.83 1.83 3.75 3.75 1.83-1.83z"/></svg>
<svg style="position:absolute;left:1310.4px;top:322.90000000000003px;color:#1a1a1a;" width="16" height="16" viewBox="0 0 24 24" fill="currentColor"><path d="M6 19c0 1.1.9 2 2 2h8c1.1 0 2-.9 2-2V7H6v12zM19 4h-3.5l-1-1h-5l-1 1H5v2h14V4z"/></svg>
<div style="position:absolute;left:527px;top:349px;width:825px;height:36px;background:#f5f5f5;border-bottom:1px solid #dedede;box-sizing:border-box"></div>
<span class="t" style="left:569.30px;top:358.60px;font-size:11.8px;line-height:16px;color:#1d1d1d">2</span>
<span class="t" style="left:627.50px;top:358.60px;font-size:11.8px;line-height:16px;color:#1d1d1d;letter-spacing:0.09px">FMC-63</span>
<span class="t" style="left:830.50px;top:358.60px;font-size:11.8px;line-height:16px;color:#1d1d1d;letter-spacing:0.06px">Face Milling Cutter (Ø63 wi...</span>
<span class="t" style="left:1008.75px;top:358.60px;font-size:11.8px;line-height:16px;color:#1d1d1d;letter-spacing:-0.54px">Nos</span>
<svg style="position:absolute;left:1277.4px;top:358.90000000000003px;color:#1a1a1a;" width="16" height="16" viewBox="0 0 24 24" fill="currentColor"><path d="M3 17.25V21h3.75L17.81 9.94l-3.75-3.75L3 17.25zM20.71 7.04c.39-.39.39-1.02 0-1.41l-2.34-2.34a.996.996 0 0 0-1.41 0l-1.83 1.83 3.75 3.75 1.83-1.83z"/></svg>
<svg style="position:absolute;left:1310.4px;top:358.90000000000003px;color:#1a1a1a;" width="16" height="16" viewBox="0 0 24 24" fill="currentColor"><path d="M6 19c0 1.1.9 2 2 2h8c1.1 0 2-.9 2-2V7H6v12zM19 4h-3.5l-1-1h-5l-1 1H5v2h14V4z"/></svg>
<div style="position:absolute;left:527px;top:385px;width:825px;height:36px;background:#fff;border-bottom:1px solid #dedede;box-sizing:border-box"></div>
<span class="t" style="left:568.80px;top:394.60px;font-size:11.8px;line-height:16px;color:#1d1d1d">3</span>
<span class="t" style="left:627.50px;top:394.60px;font-size:11.8px;line-height:16px;color:#1d1d1d;letter-spacing:0.34px">CTD-061020</span>
<span class="t" style="left:830.50px;top:394.60px;font-size:11.8px;line-height:16px;color:#1d1d1d;letter-spacing:0.01px">Carbide Twist Drill (Ø6, Ø1...</span>
<span class="t" style="left:1008.75px;top:394.60px;font-size:11.8px;line-height:16px;color:#1d1d1d;letter-spacing:-0.54px">Nos</span>
<svg style="position:absolute;left:1277.4px;top:394.90000000000003px;color:#1a1a1a;" width="16" height="16" viewBox="0 0 24 24" fill="currentColor"><path d="M3 17.25V21h3.75L17.81 9.94l-3.75-3.75L3 17.25zM20.71 7.04c.39-.39.39-1.02 0-1.41l-2.34-2.34a.996.996 0 0 0-1.41 0l-1.83 1.83 3.75 3.75 1.83-1.83z"/></svg>
<svg style="position:absolute;left:1310.4px;top:394.90000000000003px;color:#1a1a1a;" width="16" height="16" viewBox="0 0 24 24" fill="currentColor"><path d="M6 19c0 1.1.9 2 2 2h8c1.1 0 2-.9 2-2V7H6v12zM19 4h-3.5l-1-1h-5l-1 1H5v2h14V4z"/></svg>
<span class="t" style="left:568.80px;top:430.60px;font-size:11.8px;line-height:16px;color:#1d1d1d">4</span>
<div style="position:absolute;left:617px;top:421px;width:201px;height:33px;border:1px solid #05bcbc;background:#fff"></div>
<div style="position:absolute;left:618px;top:421.300px;width:197.300px;height:30.400px;border:2px solid #05bcbc;border-radius:8px;background:#fff"></div>
<span class="t" style="left:633.00px;top:431.00px;font-size:11.6px;line-height:16px;color:#333;letter-spacing:-0.25px">car</span>
<div style="position:absolute;left:650px;top:431px;width:1px;height:15px;background:#111"></div>
<svg style="position:absolute;left:791px;top:429.1px;color:#6a6a6a;" width="20" height="20" viewBox="0 0 24 24" fill="currentColor"><path d="M7 14l5-5 5 5z"/></svg>
<svg style="position:absolute;left:1277.4px;top:430.6px;color:#05bcbc;" width="16" height="16" viewBox="0 0 24 24" fill="currentColor"><path d="M17 3H5c-1.11 0-2 .9-2 2v14c0 1.1.89 2 2 2h14c1.1 0 2-.9 2-2V7l-4-4zm-5 16c-1.66 0-3-1.34-3-3s1.34-3 3-3 3 1.34 3 3-1.34 3-3 3zm3-10H5V5h10v4z"/></svg>
<svg style="position:absolute;left:1310.4px;top:430.6px;color:#111;" width="16" height="16" viewBox="0 0 24 24" fill="currentColor"><path d="M12 2C6.47 2 2 6.47 2 12s4.47 10 10 10 10-4.47 10-10S17.53 2 12 2zm5 13.59L15.59 17 12 13.41 8.41 17 7 15.59 10.59 12 7 8.41 8.41 7 12 10.59 15.59 7 17 8.41 13.41 12 17 15.59z"/></svg>
<div style="position:absolute;left:618px;top:457.300px;width:201px;height:158.700px;background:#fff;border-radius:5px 5px 8px 8px;box-shadow:0 2px 2px -1px rgba(0,0,0,.35),0 3px 6px rgba(0,0,0,.16),0 0 2px rgba(0,0,0,.12)"></div>
<div style="position:absolute;left:618px;top:464.400px;width:201px;height:47.300px;background:#e1e1e1"></div>
<span class="t" style="left:634.25px;top:470.90px;font-size:11.6px;line-height:16px;color:#333;letter-spacing:0.27px">CTD-061020 (Carbide Twist</span>
<span class="t" style="left:634.25px;top:488.90px;font-size:11.6px;line-height:16px;color:#333;letter-spacing:0.15px">Drill (Ø6, Ø10, Ø20))</span>
<span class="t" style="left:634.25px;top:519.00px;font-size:11.6px;line-height:16px;color:#333;letter-spacing:0.21px">SCEM-10-4-F (Solid Carbide</span>
<span class="t" style="left:634.25px;top:537.00px;font-size:11.6px;line-height:16px;color:#333;letter-spacing:-0.03px">End Mill)</span>
<span class="t" style="left:634.25px;top:567.10px;font-size:11.6px;line-height:16px;color:#333;letter-spacing:0.36px">CNMG-120408 (Carbide</span>
<span class="t" style="left:633.25px;top:585.10px;font-size:11.6px;line-height:16px;color:#333;letter-spacing:0.42px">Insert)</span>
<div style="position:absolute;left:177px;top:697px;width:779px;height:51px;border:1px solid #b9b9b9;border-radius:7px"></div>
<span class="t" style="left:191.25px;top:714.30px;font-size:11.8px;line-height:16px;color:#5c5c5c;letter-spacing:0.33px">Description</span>
<div style="position:absolute;left:1145px;top:716px;width:98px;height:32px;border:1px solid #10b8ba;box-shadow:inset 0 0 0 .4px #10b8ba;border-radius:17px"></div>
<span class="t" style="left:1178.75px;top:726.10px;font-size:11.2px;line-height:16px;color:#05bcbc;letter-spacing:-0.22px">Cancel</span>
<div style="position:absolute;left:1249px;top:716px;width:100px;height:34px;border-radius:17px;background:linear-gradient(45deg,#3d1350 8%,#2c2d5c 28%,#04506e 46%,#00808c 72%,#00a9ac 96%)"></div>
<span class="t" style="left:1287.50px;top:726.10px;font-size:10.8px;line-height:16px;color:#fff;font-weight:700;letter-spacing:-0.57px">Save</span>
</body></html>
